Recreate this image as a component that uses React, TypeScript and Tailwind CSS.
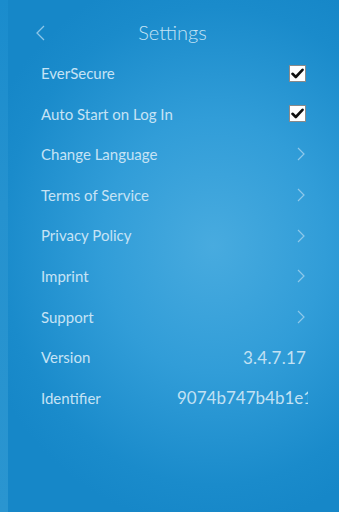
import React from "react";

function Check() {
  return (
    <div className="w-[17px] h-[17px] bg-white border border-[#8a8a8a] flex items-center justify-center">
      <svg width="13" height="11" viewBox="0 0 13 11">
        <path d="M1.5 5.8 L4.8 9 L11.5 1.8" fill="none" stroke="#111" strokeWidth="2.6" strokeLinejoin="round" strokeLinecap="round" />
      </svg>
    </div>
  );
}

function Chevron() {
  return (
    <svg width="8" height="14" viewBox="0 0 8 14" className="mr-[1px]">
      <path d="M1 1 L7 7 L1 13" fill="none" stroke="#8ec8ea" strokeWidth="1.2" />
    </svg>
  );
}

type Row = { label: string; kind: "check" | "chev" | "value" | "clip"; value?: string };

const rows: Row[] = [
  { label: "EverSecure", kind: "check" },
  { label: "Auto Start on Log In", kind: "check" },
  { label: "Change Language", kind: "chev" },
  { label: "Terms of Service", kind: "chev" },
  { label: "Privacy Policy", kind: "chev" },
  { label: "Imprint", kind: "chev" },
  { label: "Support", kind: "chev" },
  { label: "Version", kind: "value", value: "3.4.7.17" },
  { label: "Identifier", kind: "clip", value: "9074b747b4b1e1c2a" },
];

export default function App() {
  return (
    <div
      className="w-[339px] h-[512px] overflow-hidden flex bg-[#1b8acb]"
      style={{ fontFamily: "Lato, 'Open Sans', sans-serif" }}
    >
      <div className="w-[8px] h-full bg-[linear-gradient(to_bottom,#1a8ccd,#2592cf_40%,#2a95d0)]" />
      <div className="flex-1 h-full flex flex-col bg-[radial-gradient(ellipse_75%_55%_at_62%_48%,#48abdf_0%,#319dd8_45%,#1a8bcb_85%,#1687c8_100%)]">
        <div className="h-[53px] relative flex items-start justify-center pt-[19px]">
          <svg width="9" height="16" viewBox="0 0 9 16" className="absolute left-[28px] top-[25px]">
            <path d="M8 1 L1 8 L8 15" fill="none" stroke="#8ec6e8" strokeWidth="1.3" />
          </svg>
          <span className="text-[20px] leading-[26px] text-[#c4e3f5] font-light mr-[2px]">Settings</span>
        </div>
        {rows.map((r) => (
          <div key={r.label} className="h-[40.6px] flex items-center pl-[33px] pr-[33px]">
            <span className="text-[15px] text-[#c6e3f5] whitespace-nowrap">{r.label}</span>
            <div className="flex-1" />
            {r.kind === "check" && <Check />}
            {r.kind === "chev" && <Chevron />}
            {r.kind === "value" && (
              <span className="text-[17px] text-[#c2e1f3] tracking-[0.2px]">{r.value}</span>
            )}
            {r.kind === "clip" && (
              <div className="w-[131px] overflow-hidden whitespace-nowrap mr-[-2px]">
                <span className="text-[17px] text-[#c2e1f3]">{r.value}</span>
              </div>
            )}
          </div>
        ))}
      </div>
    </div>
  );
}
